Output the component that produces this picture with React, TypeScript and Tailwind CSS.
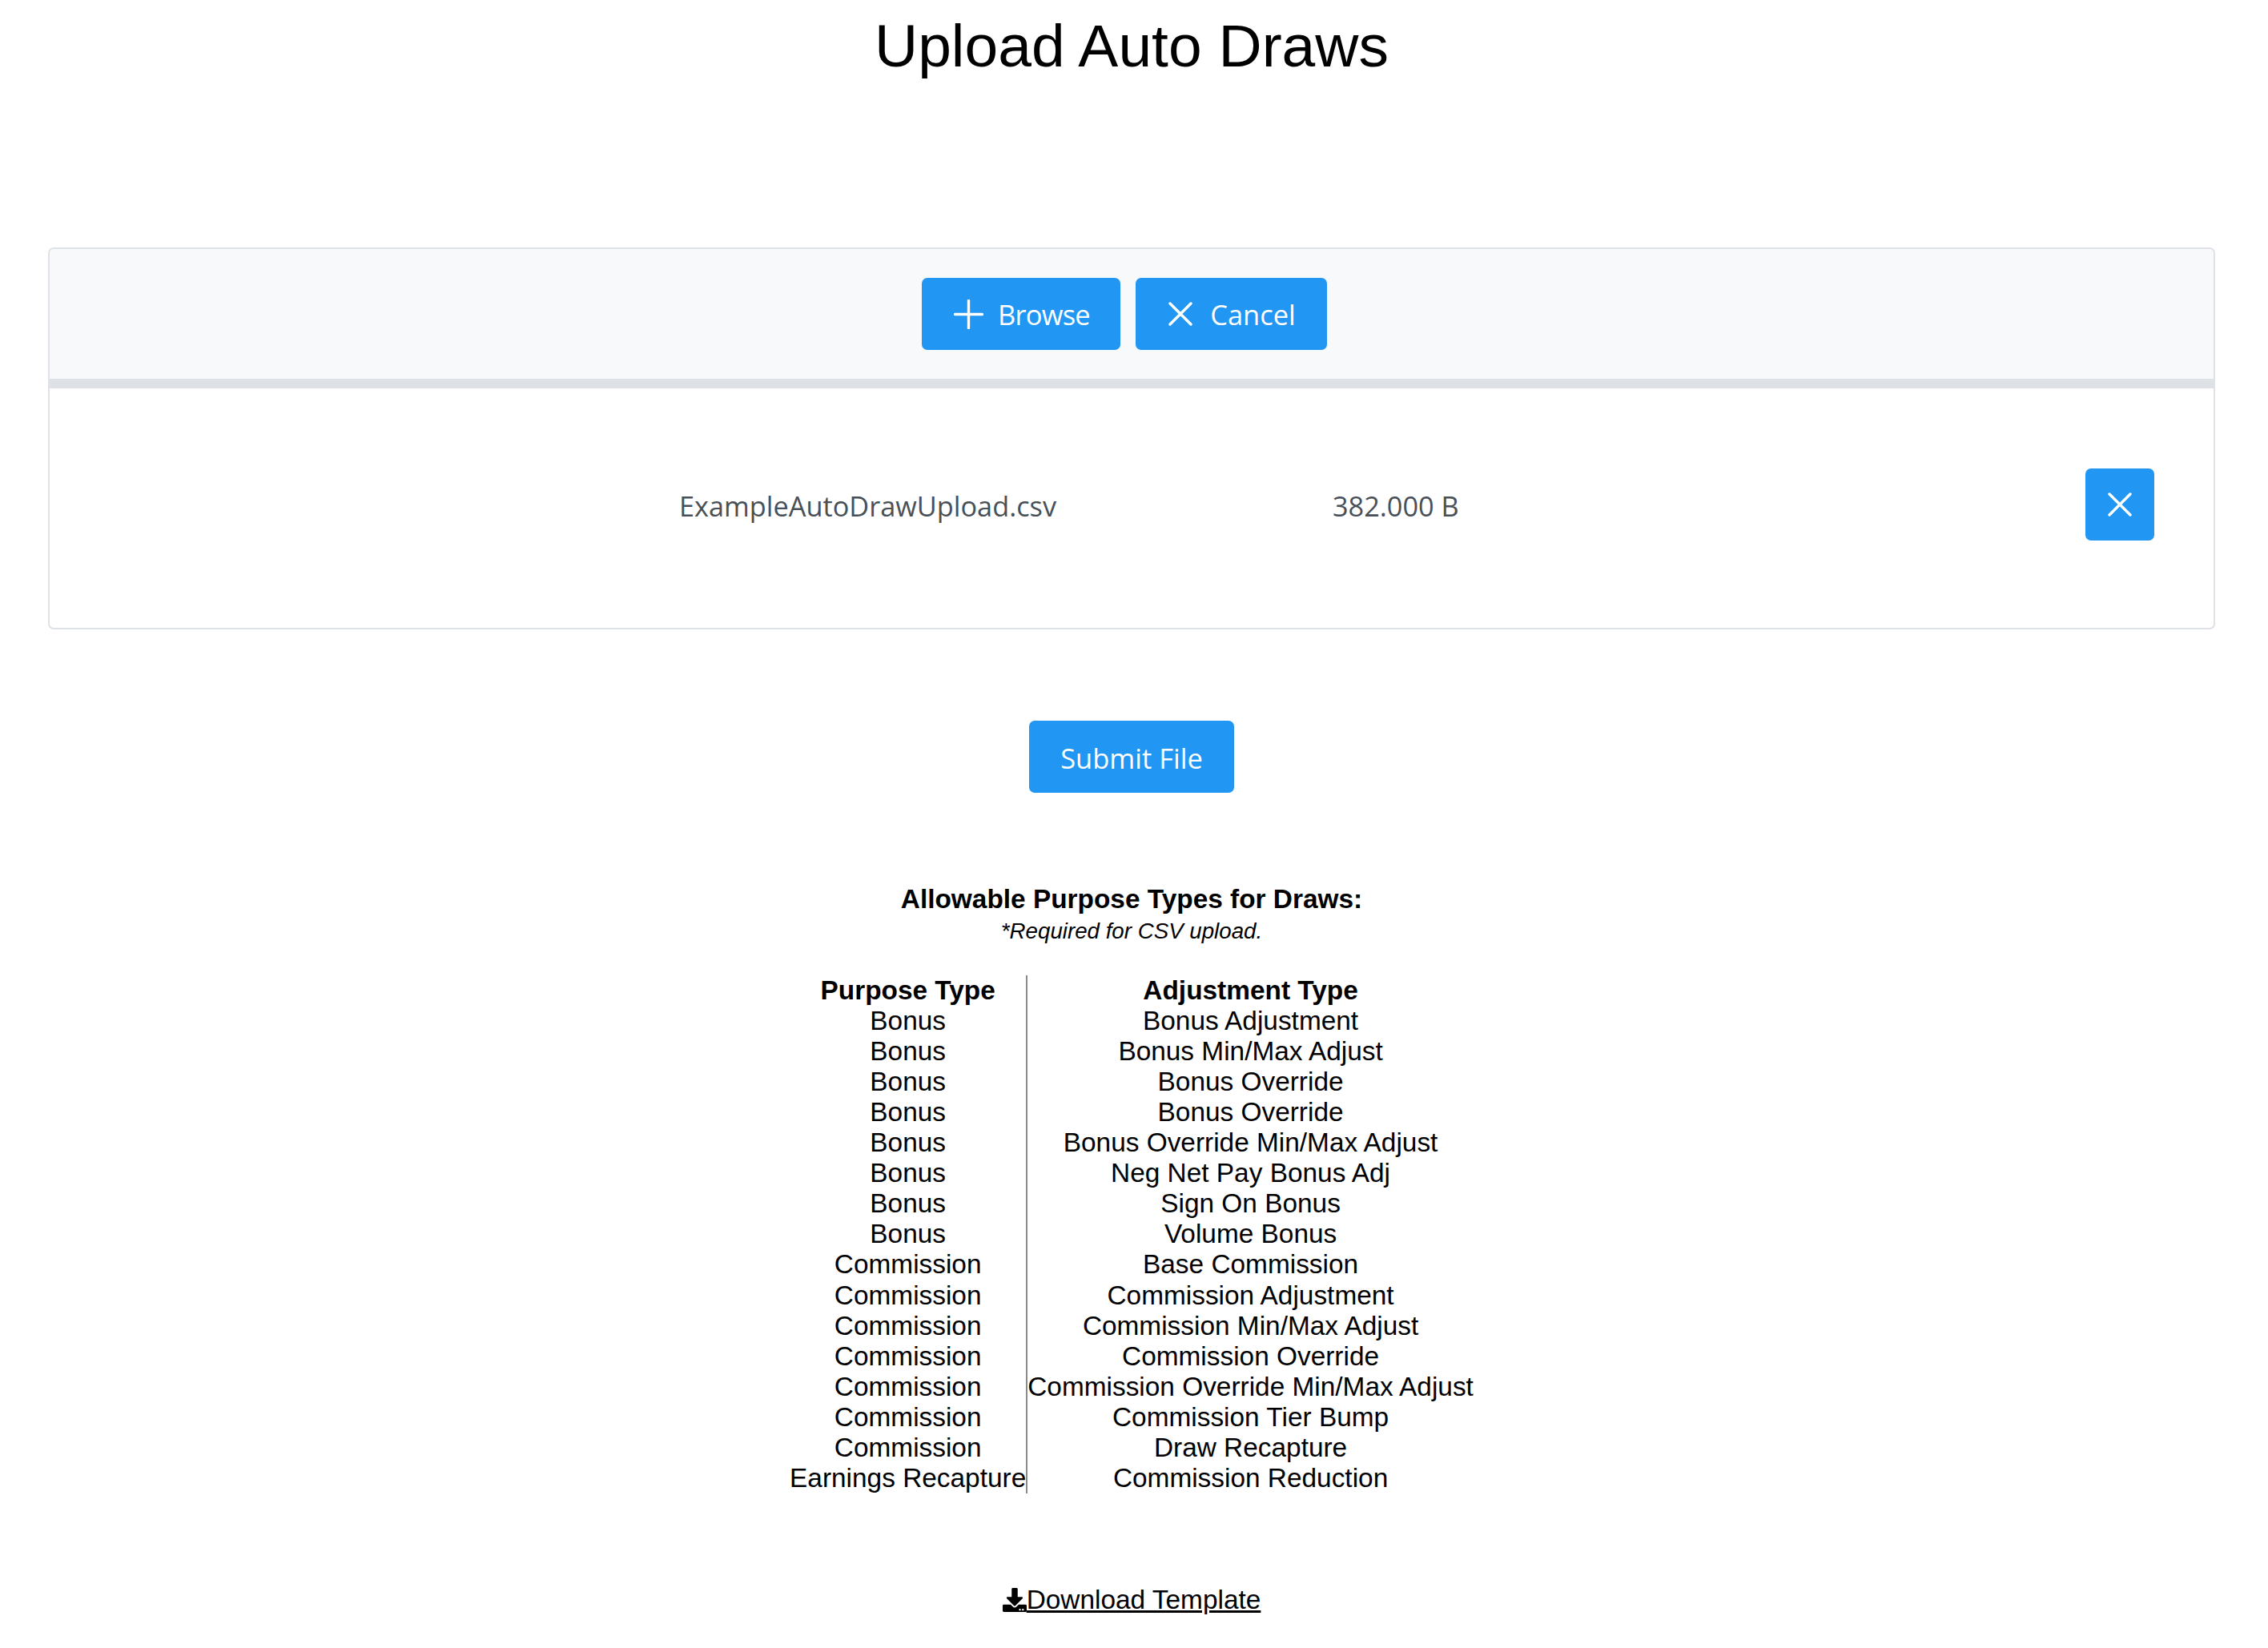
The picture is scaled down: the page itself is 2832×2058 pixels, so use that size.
import { FaDownload } from "react-icons/fa";

const rows: [string, string][] = [
  ["Bonus", "Bonus Adjustment"],
  ["Bonus", "Bonus Min/Max Adjust"],
  ["Bonus", "Bonus Override"],
  ["Bonus", "Bonus Override"],
  ["Bonus", "Bonus Override Min/Max Adjust"],
  ["Bonus", "Neg Net Pay Bonus Adj"],
  ["Bonus", "Sign On Bonus"],
  ["Bonus", "Volume Bonus"],
  ["Commission", "Base Commission"],
  ["Commission", "Commission Adjustment"],
  ["Commission", "Commission Min/Max Adjust"],
  ["Commission", "Commission Override"],
  ["Commission", "Commission Override Min/Max Adjust"],
  ["Commission", "Commission Tier Bump"],
  ["Commission", "Draw Recapture"],
  ["Earnings Recapture", "Commission Reduction"],
];

function PlusIcon() {
  return (
    <svg viewBox="0 0 37 37" className="h-[37px] w-[37px]" fill="none" stroke="white" strokeWidth="3.4" strokeLinecap="round">
      <path d="M18.5 1.5v34M1.5 18.5h34" />
    </svg>
  );
}

function CloseIcon() {
  return (
    <svg viewBox="0 0 30 30" className="h-[30px] w-[30px]" fill="none" stroke="white" strokeWidth="3.4" strokeLinecap="round">
      <path d="M2 2l26 26M28 2L2 28" />
    </svg>
  );
}

export default function App() {
  return (
    <div className="h-[2058px] w-[2826px] overflow-hidden bg-white font-['Liberation_Sans',Arial,sans-serif] text-black">
      <h1 className="pt-[10px] text-center text-[75px] leading-[95px] font-normal">Upload Auto Draws</h1>

      <div className="mx-[60px] mt-[204px] w-[2706px] rounded-[7px] border-2 border-[#dee2e6] font-['Open_Sans',sans-serif]">
        <div className="flex h-[174px] items-start justify-center gap-[19px] rounded-t-[6px] border-b-[12px] border-[#dee2e6] bg-[#f8f9fa] pt-[36px] pr-[19px]">
          <button className="flex h-[90px] w-[248px] items-center justify-center gap-[18px] rounded-[7px] bg-[#2196f3] pl-[3px] text-white">
            <PlusIcon />
            <span className="pt-[2px] text-[34.5px] tracking-[-0.8px]">Browse</span>
          </button>
          <button className="flex h-[90px] w-[239px] items-center justify-center gap-[22px] rounded-[7px] bg-[#2196f3] pl-[3px] text-white">
            <CloseIcon />
            <span className="pt-[2px] text-[34.5px]">Cancel</span>
          </button>
        </div>
        <div className="flex h-[299px] items-center pb-[6px] text-[34.3px] text-[#495057]">
          <span className="ml-[786px] w-[816px]">ExampleAutoDrawUpload.csv</span>
          <span className="w-[940px]">382.000 B</span>
          <button className="mb-[4px] flex h-[90px] w-[86px] items-center justify-center rounded-[7px] bg-[#2196f3]">
            <CloseIcon />
          </button>
        </div>
      </div>

      <div className="mt-[114px] flex justify-center">
        <button className="h-[90px] w-[256px] rounded-[7px] bg-[#2196f3] pt-[4px] font-['Open_Sans',sans-serif] text-[34.5px] text-white">Submit File</button>
      </div>

      <div className="mt-[114px] text-center text-[33.4px] leading-[38px] font-bold">Allowable Purpose Types for Draws:</div>
      <div className="mt-[2px] text-center text-[27.7px] leading-[38px] italic">*Required for CSV upload.</div>

      <div className="mt-[35.6px] flex justify-center text-[33.4px] leading-[38.1px]">
        <div className="border-r-2 border-[#8a8a8a] text-center">
          <div className="font-bold">Purpose Type</div>
          {rows.map((r, i) => (
            <div key={i}>{r[0]}</div>
          ))}
        </div>
        <div className="text-center">
          <div className="font-bold">Adjustment Type</div>
          {rows.map((r, i) => (
            <div key={i}>{r[1]}</div>
          ))}
        </div>
      </div>

      <div className="mt-[114px] flex justify-center">
        <a href="#" className="flex items-center text-[33.4px] leading-[38px] underline">
          <FaDownload className="h-[30px] w-[30px]" />
          Download Template
        </a>
      </div>
    </div>
  );
}
